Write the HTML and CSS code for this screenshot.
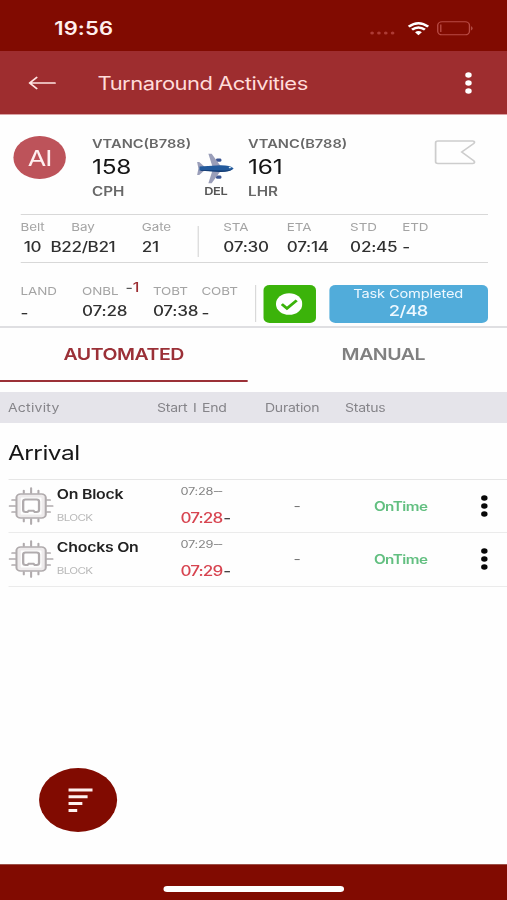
FILE: index.html
```html
<!DOCTYPE html>
<html lang="en">
<head>
<meta charset="utf-8">
<title>Turnaround Activities</title>
<link rel="stylesheet" href="styles.css">
</head>
<body>
<svg width="0" height="0" class="defs">
  <symbol id="dots" viewBox="0 0 8 24"><circle cx="4" cy="4" r="2.650"/><circle cx="4" cy="12" r="2.650"/><circle cx="4" cy="20" r="2.650"/></symbol>
  <symbol id="chip" viewBox="0 0 37 38">
    <g fill="none" stroke="#b0abad" stroke-linecap="round">
      <rect x="8.500" y="9" width="20" height="20" rx="2" stroke="#eeebec" stroke-width="3"/>
      <rect x="6.500" y="7" width="24" height="24" rx="3.500" stroke-width="1.700"/>
      <path d="M15.500 25H14a2 2 0 0 1-2-2v-8.500a2 2 0 0 1 2-2h9a2 2 0 0 1 2 2V23a2 2 0 0 1-2 2h-1.500l-1-1.200h-4z" stroke-width="1.900"/>
      <path d="M12.500 6V3.500M18.500 6V1M24.500 6V3.500M12.500 32v2.500M18.500 32v5M24.500 32v2.500M5.500 13H3M5.500 19H.8M5.500 25H3M31.500 13H34M31.500 19h4.700M31.500 25H34" stroke-width="1.700"/>
    </g>
  </symbol>
</svg>
<div class="app">
  <div class="status-bar">
    <span class="clock">19:56</span>
    <svg class="signal" viewBox="0 0 22 4"><circle cx="2" cy="2" r="1.500"/><circle cx="7.600" cy="2" r="1.500"/><circle cx="13.200" cy="2" r="1.500"/><circle cx="18.800" cy="2" r="1.500"/></svg>
    <svg class="wifi" viewBox="0 0 18 14"><path d="M1 4.700Q9-2.300 17 4.700M3.700 7.700Q9 3.200 14.300 7.700" fill="none" stroke="#fff" stroke-width="2.300"/><path d="M6.200 10.300Q9 7.700 11.800 10.300L9 13.300z" fill="#fff"/></svg>
    <svg class="battery" viewBox="0 0 31 15"><rect x=".8" y=".8" width="26" height="13" rx="3.500" fill="none" stroke="#b94b45" stroke-width="1.100"/><path d="M3.300 3.500v7.500" stroke="#b94b45" stroke-width="1.100"/><path d="M28.300 5q2 2.300 0 4.600z" fill="#c56a64"/></svg>
  </div>
  <header class="title-bar">
    <svg class="back" viewBox="0 0 23 14"><path d="M22 7H1.500M7 1.500L1.300 7L7 12.500" fill="none" stroke="#ffe4e2" stroke-width="1.700" stroke-linecap="round" stroke-linejoin="round"/></svg>
    <h1>Turnaround Activities</h1>
    <svg class="menu light"><use href="#dots"/></svg>
  </header>

  <section class="flight">
    <div class="avatar">AI</div>
    <div class="leg"><span class="tail">VTANC(B788)</span><span class="number">158</span><span class="port">CPH</span></div>
    <div class="via">
      <svg viewBox="0 0 31 31">
        <g fill="#3c5592"><rect x="16" y="5.500" width="4.500" height="3.300" rx="1.300"/><rect x="16" y="22.500" width="4.500" height="3.300" rx="1.300"/></g>
        <path d="M9.800.8h2.700L19.800 13v5L12.500 30.200H9.800L13 18v-5zM.6 9h1.700l4.200 4.500v4L2.300 22H.6l1-6.500z" fill="#9a9eb9"/>
        <path d="M2.500 13.500L20 12.200q8 0 10.500 3.300Q28 18.800 20 18.800L2.500 17.500z" fill="#235a9c"/>
        <path d="M3 17L20 17.600q7 0 10-1.600Q27 18.900 20 18.900L4 17.800z" fill="#143a71"/>
        <path d="M26.500 13.700q2 .5 2.500 1.400l-2.300.2z" fill="#d7ebf7"/>
      </svg>
      <span>DEL</span>
    </div>
    <div class="leg"><span class="tail">VTANC(B788)</span><span class="number">161</span><span class="port">LHR</span></div>
    <svg class="flag" viewBox="0 0 34 25"><path d="M3 1H31.500Q34 1.500 32.300 3.500L22.500 12L32.300 20.800Q34 23 31.500 23.500H3Q1 23.500 1 21.500V3Q1 1 3 1z" fill="none" stroke="#cdcdcd" stroke-width="1.500"/></svg>
  </section>

  <section class="times stand">
    <dl class="belt"><dt>Belt</dt><dd>10</dd></dl>
    <dl class="bay"><dt>Bay</dt><dd>B22/B21</dd></dl>
    <dl class="gate"><dt>Gate</dt><dd>21</dd></dl>
    <i class="rule"></i>
    <dl><dt>STA</dt><dd>07:30</dd></dl>
    <dl><dt>ETA</dt><dd>07:14</dd></dl>
    <dl><dt>STD</dt><dd>02:45</dd></dl>
    <dl><dt>ETD</dt><dd>-</dd></dl>
  </section>

  <section class="times block">
    <dl><dt>LAND</dt><dd class="dash">-</dd></dl>
    <dl><dt>ONBL<sup><b>-</b>1</sup></dt><dd>07:28</dd></dl>
    <dl><dt>TOBT</dt><dd>07:38</dd></dl>
    <dl><dt>COBT</dt><dd class="dash">-</dd></dl>
    <i class="rule"></i>
    <div class="done"><svg viewBox="0 0 22 22"><circle cx="11" cy="11" r="10.800" fill="#fff"/><path d="M5 11.200l4.200 4.200l8-8" fill="none" stroke="#3bb30a" stroke-width="2.500"/></svg></div>
    <div class="tasks"><span>Task Completed</span><strong>2/48</strong></div>
  </section>

  <nav class="tabs"><a class="active">AUTOMATED</a><a>MANUAL</a></nav>
  <div class="columns"><span class="first">Activity</span><span>Start <i>I</i> End</span><span>Duration</span><span>Status</span></div>

  <main>
    <h2>Arrival</h2>
    <article class="row">
      <svg class="chip"><use href="#chip"/></svg>
      <div class="activity"><strong>On Block</strong><span>BLOCK</span></div>
      <div class="actual"><span>07:28<small>--</small></span><em>07:28<b>-</b></em></div>
      <span class="duration">-</span>
      <span class="state">OnTime</span>
      <svg class="menu"><use href="#dots"/></svg>
    </article>
    <article class="row">
      <svg class="chip"><use href="#chip"/></svg>
      <div class="activity"><strong>Chocks On</strong><span>BLOCK</span></div>
      <div class="actual"><span>07:29<small>--</small></span><em>07:29<b>-</b></em></div>
      <span class="duration">-</span>
      <span class="state">OnTime</span>
      <svg class="menu"><use href="#dots"/></svg>
    </article>
    <div class="fab"><svg viewBox="0 0 20 25"><path d="M0 2h20M0 8.800h15.800M0 15.600h11.500M0 22.400h7.300" stroke="#fff1ef" stroke-width="3"/></svg></div>
  </main>
  <footer><i></i></footer>
</div>
</body>
</html>
```

FILE: styles.css
```css
* { box-sizing: border-box; }
body { margin: 0; width: 507px; height: 900px; overflow: hidden; background: #fefefe; }
h1, h2, dl, dd { margin: 0; font-weight: 400; }
.defs { position: absolute; }
svg { display: block; flex: none; }

/* The layout is drawn on a narrow canvas and stretched to the window width. */
.app {
  width: 415.574px;
  height: 900px;
  display: flex;
  flex-direction: column;
  transform: scaleX(1.22);
  transform-origin: 0 0;
  font-family: Inter, "Liberation Sans", sans-serif;
  color: #303030;
}

.status-bar { height: 51px; background: #810b01; display: flex; align-items: center; padding: 6px 0 0 44.500px; }
.clock { width: 258.500px; font-size: 18px; line-height: 24px; padding-top: 1px; font-weight: 600; color: #fff0ed; letter-spacing: .1px; }
.signal { width: 22px; height: 4px; fill: #ad3b35; margin: 9px 9px 0 0; }
.wifi { width: 18px; height: 14px; margin-right: 6px; }
.battery { width: 31px; height: 15px; }

.title-bar { height: 64px; background: #9e2d2f; border-bottom: 1px solid #d9a2a4; display: flex; align-items: center; padding-left: 23px; }
.back { width: 23px; height: 14px; }
.title-bar h1 { width: 299.500px; margin-left: 34px; padding-top: 1px; font-size: 18px; color: #ffdcda; letter-spacing: -.42px; }
.menu { width: 8px; height: 24px; fill: #080808; }
.menu.light { fill: #fff; }

.flight { height: 99px; display: flex; padding: 0 0 0 11.200px; }
.avatar { width: 42.600px; height: 43px; margin: 21px 21.600px 0 0; border-radius: 50%; background: #bd535a; color: #fff0f0; font-size: 22px; letter-spacing: -.8px; line-height: 44px; text-align: center; }
.leg { width: 86px; display: flex; flex-direction: column; padding-top: 20px; font-weight: 600; color: #686868; }
.tail { font-size: 12px; line-height: 17px; }
.number { font-size: 20px; line-height: 30px; font-weight: 400; color: #151515; letter-spacing: -.2px; }
.port { font-size: 12.500px; line-height: 19px; }
.via { width: 31px; margin-right: 11px; padding-top: 38px; font-size: 10.500px; font-weight: 600; line-height: 15px; color: #555; text-align: center; letter-spacing: -.3px; }
.via svg { width: 31px; height: 31px; }
.flag { width: 34px; height: 25px; margin: 25px 0 0 67px; }

.times { display: flex; margin: 0 16px 0 16.800px; }
.times dt { font-size: 11px; line-height: 18px; color: #a4a4a4; letter-spacing: -.05px; white-space: nowrap; }
.times dd { font-size: 14px; line-height: 22px; font-weight: 500; letter-spacing: -.2px; white-space: nowrap; }
.rule { width: 1.500px; background: #d9d9d9; }
.stand { height: 49px; border-top: 1.500px solid #d8d8d8; border-bottom: 1.500px solid #d8d8d8; padding-top: 3px; }
.stand dl { width: 52px; }
.stand dl:last-child { width: 42px; }
.stand dl:nth-last-child(2) { width: 42.700px; }
.stand .belt { width: 24.600px; }
.belt dd { padding-left: 2.700px; }
.stand .bay { width: 74.800px; }
.bay dt { padding-left: 17px; }
.bay dd { letter-spacing: -.3px; }
.stand .gate { width: 45.500px; }
.stand .rule { height: 31px; margin: 8px 19.800px 0 0; }

.block { height: 63px; padding-top: 18px; }
.block dl { width: 50.600px; position: relative; }
.block dl:nth-child(2) { width: 58.100px; }
.block dl:nth-child(3) { width: 39.800px; }
.block dl:nth-child(4) { width: 43.700px; }
.block dt { padding-top: 1px; }
.times .dash { line-height: 25px; }
.times sup { position: absolute; left: 35.500px; top: -3px; font-size: 13px; font-weight: 500; color: #9b2c31; }
.times sup b { font-weight: 500; color: #555; }
.block .rule { height: 37px; margin: 4px 5.900px 0 0; }
.done { width: 42.600px; height: 38px; margin: 4px 10.900px 0 0; border-radius: 5px; background: #3bb30a; display: grid; place-items: center; flex: none; }
.done svg { width: 22px; height: 22px; }
.tasks { width: 130px; height: 38px; margin-top: 4px; border-radius: 5px; background: #51acda; color: #eef8ff; display: flex; flex-direction: column; align-items: center; font-size: 12px; line-height: 17px; letter-spacing: -.12px; flex: none; }
.tasks strong { font-size: 15px; line-height: 17px; font-weight: 500; letter-spacing: -.6px; }

.tabs { height: 66px; border-top: 2px solid #dfdfe2; display: grid; grid-template-columns: 1fr 1fr; column-gap: 10px; }
.tabs a { height: 54px; line-height: 53px; text-align: center; font-size: 16px; font-weight: 600; letter-spacing: -.4px; color: #808080; }
.tabs .active { color: #9b3037; border-bottom: 2.500px solid #9b3037; }
.columns { height: 31px; background: #e5e4ea; display: grid; grid-template-columns: 122.200px 88.500px 65.600px auto; padding-left: 6.500px; font-size: 11.500px; line-height: 32px; color: #858489; letter-spacing: -.2px; }
.columns .first { letter-spacing: .2px; }
.columns i { font-style: normal; padding: 0 1.500px; }

main { flex: 1; display: flex; flex-direction: column; padding-left: 6.500px; }
h2 { height: 57px; border-bottom: 1px solid #e6e6e6; font-size: 20px; line-height: 61px; letter-spacing: -.4px; color: #161616; }
.row { height: 53.300px; display: flex; align-items: center; border-bottom: 1.500px solid #ebebeb; }
.chip { width: 37px; height: 38px; margin-left: .8px; }
.activity { width: 101.400px; margin-left: 2.300px; display: flex; flex-direction: column; }
.activity strong { font-size: 13px; line-height: 24px; font-weight: 600; letter-spacing: -.2px; color: #222; }
.activity span { font-size: 9.500px; line-height: 24px; color: #b9b9b9; letter-spacing: -.55px; }
.actual { width: 92.500px; display: flex; flex-direction: column; padding-bottom: 1px; }
.actual span { font-size: 10.500px; line-height: 24px; color: #838383; letter-spacing: -.25px; }
.actual small { font-size: inherit; letter-spacing: -1.500px; }
.actual em { font-style: normal; font-size: 14px; line-height: 28px; font-weight: 500; letter-spacing: -.75px; color: #d74450; }
.actual em b { font-weight: 500; margin-left: .8px; color: #444; }
.duration { width: 66px; font-size: 13px; color: #777; }
.state { width: 86.200px; font-size: 12.500px; font-weight: 600; color: #62bf80; letter-spacing: -.45px; }

.fab { width: 64px; height: 64px; margin: auto 0 32px 25.700px; border-radius: 50%; background: #810b01; display: grid; place-items: center; }
.fab svg { width: 20px; height: 25px; margin-left: 4px; }
footer { height: 36px; background: #810b01; border-top: 1px solid #9c5048; display: flex; justify-content: center; padding-top: 21px; }
footer i { width: 148px; height: 6px; border-radius: 3px; background: #fff; }
```
